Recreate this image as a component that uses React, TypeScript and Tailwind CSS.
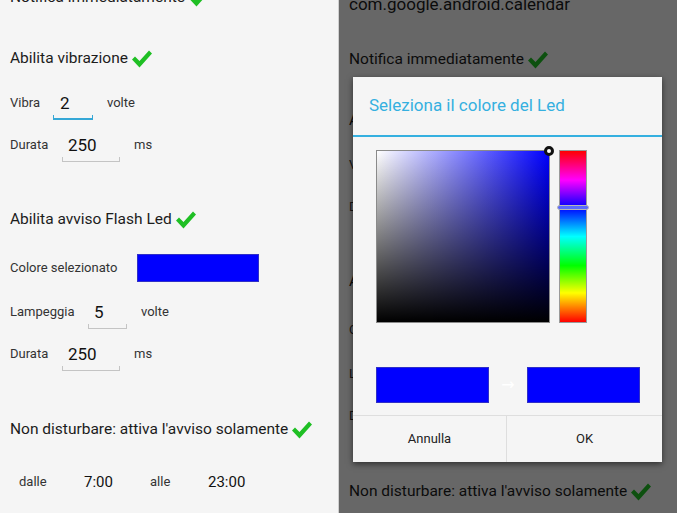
import type { ReactNode } from 'react'

function Check() {
  return (
    <svg width="20" height="18" viewBox="0 0 20 18" className="ml-[4px] shrink-0">
      <polygon points="0,9.5 3,6.5 7.5,11 17,0.5 20,3.5 7.5,17.5" fill="#1fbf24" />
    </svg>
  )
}

function Heading({ children, check = true }: { children: ReactNode; check?: boolean }) {
  return (
    <div className="flex items-center h-[40px] px-[10px] text-[15.5px] text-[#1c1c1c]">
      <span>{children}</span>
      {check && <Check />}
    </div>
  )
}

function Field({ value, width, pad, active = false }: { value: string; width: string; pad: string; active?: boolean }) {
  return (
    <div className={`flex flex-col pt-[7px] ${width}`}>
      <div className={`h-[20px] leading-[20px] text-[17px] text-[#111] ${pad}`}>{value}</div>
      <div
        className={
          active
            ? 'mt-[2px] h-[5px] border-x border-b-2 border-[#35a7d6]'
            : 'mt-[2px] h-[5px] border-x border-b border-[#c4c4c4]'
        }
      />
    </div>
  )
}

function SettingsContent({ offset }: { offset: string }) {
  return (
    <div className={`flex flex-col ${offset}`}>
      <div className="flex items-center h-[40px] px-[10px] text-[17px] text-[#1c1c1c]">com.google.android.calendar</div>
      <div className="mt-[15px]">
        <Heading>Notifica immediatamente</Heading>
      </div>
      <div className="mt-[21px]">
        <Heading>Abilita vibrazione</Heading>
      </div>
      <div className="mt-[4px] flex items-center h-[40px] px-[10px] text-[13px] text-[#333]">
        <span className="w-[43px]">Vibra</span>
        <Field value="2" width="w-[40px]" pad="pl-[7px]" active />
        <span className="ml-[14px]">volte</span>
      </div>
      <div className="mt-[2px] flex items-center h-[40px] px-[10px] text-[13px] text-[#333]">
        <span className="w-[52px]">Durata</span>
        <Field value="250" width="w-[58px]" pad="pl-[6px]" />
        <span className="ml-[14px]">ms</span>
      </div>
      <div className="mt-[35px]">
        <Heading>Abilita avviso Flash Led</Heading>
      </div>
      <div className="mt-[8px] flex items-center h-[40px] px-[10px] text-[13px] text-[#333]">
        <span className="w-[127px]">Colore selezionato</span>
        <div className="w-[122px] h-[28px] bg-[#0000ff] border border-[#2f2fc8]" />
      </div>
      <div className="mt-[4px] flex items-center h-[40px] px-[10px] text-[13px] text-[#333]">
        <span className="w-[78px]">Lampeggia</span>
        <Field value="5" width="w-[39px]" pad="pl-[6px]" />
        <span className="ml-[14px]">volte</span>
      </div>
      <div className="mt-[2px] flex items-center h-[40px] px-[10px] text-[13px] text-[#333]">
        <span className="w-[52px]">Durata</span>
        <Field value="250" width="w-[58px]" pad="pl-[6px]" />
        <span className="ml-[14px]">ms</span>
      </div>
      <div className="mt-[36px]">
        <Heading>Non disturbare: attiva l'avviso solamente</Heading>
      </div>
      <div className="mt-[12px] flex items-center h-[40px] pl-[19px]">
        <span className="w-[65px] text-[13px] text-[#333]">dalle</span>
        <span className="w-[66px] text-[15px] text-[#111]">7:00</span>
        <span className="w-[58px] text-[13px] text-[#333]">alle</span>
        <span className="text-[15px] text-[#111]">23:00</span>
      </div>
    </div>
  )
}

function ColorDialog() {
  return (
    <div className="absolute left-[14px] top-[77px] w-[309px] h-[385px] flex flex-col bg-[#f5f5f5] shadow-[0_2px_6px_rgba(0,0,0,0.55)]">
      <div className="h-[58px] flex items-center px-[16px] text-[17px] text-[#35b0e0]">Seleziona il colore del Led</div>
      <div className="h-[2px] bg-[#35b0e0]" />
      <div className="flex pt-[13px] pl-[23px] gap-[9px]">
        <div className="relative w-[174px] h-[173px] border border-[#8a8a8a] bg-[linear-gradient(to_right,#ffffff,#0000ff)]">
          <div className="w-full h-full bg-[linear-gradient(to_top,#000000,rgba(0,0,0,0))]" />
          <div className="absolute -right-[5px] -top-[5px] w-[10px] h-[10px] rounded-full border-[3px] border-[#111] bg-white" />
        </div>
        <div className="relative w-[28px] h-[173px] border border-[#9a9a9a] bg-[linear-gradient(to_bottom,#ff0000,#ff00ff_17%,#0000ff_33%,#00ffff_50%,#00ff00_67%,#ffff00_83%,#ff0000)]">
          <div className="absolute -left-[3px] -right-[3px] top-[54px] h-[5px] rounded-full border border-[#b8b8b8] bg-[#5a6aff]" />
        </div>
      </div>
      <div className="flex items-center mt-[44px] pl-[23px]">
        <div className="w-[113px] h-[36px] bg-[#0000ff] border border-[#2f2fc8]" />
        <div className="w-[38px] text-center text-[16px] leading-none text-white font-['DejaVu_Sans',sans-serif]">→</div>
        <div className="w-[113px] h-[36px] bg-[#0000ff] border border-[#2f2fc8]" />
      </div>
      <div className="mt-[12px] flex flex-1 border-t border-[#dedede] text-[13px] text-[#222]">
        <div className="w-[154px] flex items-center justify-center border-r border-[#dedede]">Annulla</div>
        <div className="flex-1 flex items-center justify-center">OK</div>
      </div>
    </div>
  )
}

export default function App() {
  return (
    <div className="flex w-[677px] h-[513px] overflow-hidden bg-[#f5f5f5] font-['Roboto','Liberation_Sans',sans-serif]">
      <div className="w-[339px] h-full overflow-hidden bg-[#f5f5f5] border-r border-[#cfcfcf]">
        <SettingsContent offset="-mt-[77px]" />
      </div>
      <div className="relative flex-1 h-full overflow-hidden bg-[#f5f5f5]">
        <SettingsContent offset="-mt-[15px]" />
        <div className="absolute inset-0 bg-[rgba(0,0,0,0.58)]" />
        <ColorDialog />
      </div>
    </div>
  )
}
